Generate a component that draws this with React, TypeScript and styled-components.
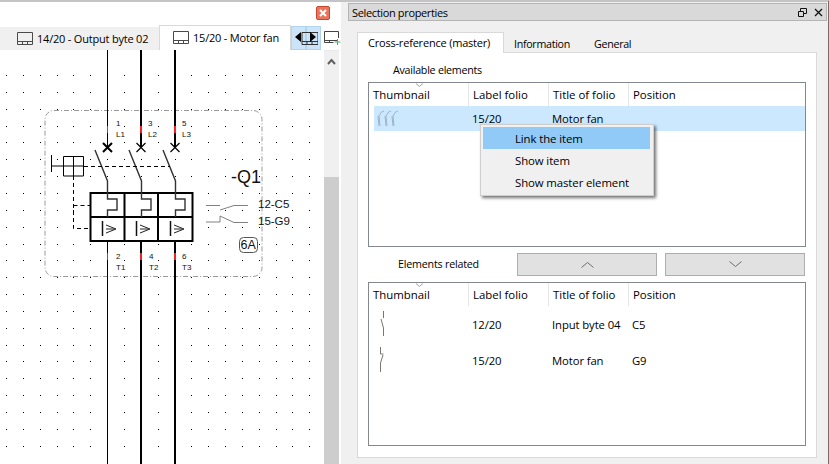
import React from "react";
import styled, { createGlobalStyle } from "styled-components";

const Global = createGlobalStyle`
  html, body { margin: 0; padding: 0; background: #f0f0f0; }
  * { box-sizing: border-box; }
`;

const Window = styled.div`
  width: 829px; height: 464px; display: flex; overflow: hidden; background: #f0f0f0;
  border-top: 2px solid #c4c4c4; border-right: 1px solid #6e6e6e;
  font-family: "Open Sans", "Noto Sans", sans-serif; font-size: 11px; letter-spacing: -0.2px; color: #000;
`;
const LeftPane = styled.div`width: 341px; flex: none; display: flex; flex-direction: column; background: #fff;`;
const CloseBar = styled.div`height: 23px; flex: none; display: flex; justify-content: flex-end; align-items: flex-start; padding: 4px 11px 0 0;`;
const CloseButton = styled.div`
  width: 14px; height: 14px; background: #e9765c; border: 1px solid #c9452e; border-radius: 2px;
  display: flex; align-items: center; justify-content: center;
`;
const TabBar = styled.div`height: 25px; flex: none; display: flex; align-items: flex-end; background: #fff;`;
const FolioTab = styled.div<{ $active?: boolean }>`
  display: flex; align-items: center; gap: 4px; flex: none;
  height: ${p => (p.$active ? 25 : 23)}px;
  width: ${p => (p.$active ? 132 : 159)}px;
  padding-left: ${p => (p.$active ? 13 : 17)}px;
  padding-bottom: ${p => (p.$active ? 2 : 0)}px;
  background: ${p => (p.$active ? "#fff" : "#f0f0f0")};
  border: ${p => (p.$active ? "1px solid #d9d9d9" : "none")};
  border-bottom: none;
  white-space: nowrap;
`;
const ScrollArrow = styled.div`width: 15px; height: 24px; flex: none; background: #cce4f7; border: 1px solid #b3d4ee;`;
const NavGroup = styled.div`position: relative; display: flex; flex: none;`;
const NavIcon = styled.svg`position: absolute; left: 3px; top: 5px;`;
const AddIcon = styled.svg`margin: 0 0 5px 3px; flex: none;`;
const Work = styled.div`flex: 1; display: flex; min-height: 0;`;
const Canvas = styled.svg`width: 324px; height: 414px; flex: none; display: block; background: #fff;`;
const VScroll = styled.div`width: 15px; flex: none; display: flex; flex-direction: column; background: #f0f0f0; border-top: 1px solid #e8e8e8;`;
const VArrow = styled.svg`display: block; margin: 7px 0 0 3px; flex: none;`;
const VThumb = styled.div`margin-top: auto; height: 287px; background: #cdcdcd;`;
const RightPane = styled.div`flex: 1; min-width: 0; display: flex; flex-direction: column; padding: 1px 1px 0 7px;`;
const TitleBar = styled.div`
  height: 18px; flex: none; display: flex; align-items: center; justify-content: space-between;
  background: #d9d9d9; border: 1px solid #b4b4b4; padding: 0 3px 0 3px; letter-spacing: -0.35px;
`;
const TitleIcons = styled.div`display: flex; align-items: center; gap: 7px;`;
const PropTabs = styled.div`height: 20px; margin: 11px 0 0 9px; flex: none; display: flex; align-items: flex-end;`;
const PropTab = styled.div<{ $active?: boolean; $w: number }>`
  width: ${p => p.$w}px; height: ${p => (p.$active ? 21 : 18)}px; flex: none; padding-left: 10px;
  background: ${p => (p.$active ? "#fff" : "transparent")};
  border: ${p => (p.$active ? "1px solid #d9d9d9" : "none")};
  border-bottom: none; margin-bottom: ${p => (p.$active ? -1 : 0)}px;
  font-size: ${p => (p.$active ? 11 : 10.7)}px; letter-spacing: ${p => (p.$active ? -0.2 : -0.3)}px;
  position: relative; z-index: 1; white-space: nowrap; line-height: ${p => (p.$active ? 19 : 20)}px;
`;
const Page = styled.div`
  position: relative; width: 460px; height: 406px; margin-left: 9px; flex: none;
  background: #fff; border: 1px solid #d9d9d9; display: flex; flex-direction: column; padding: 0 9px 0 10px;
`;
const GroupLabel = styled.div`height: 29px; padding: 9px 0 0 25px; flex: none; line-height: 17px; font-size: 10.7px; letter-spacing: -0.25px;`;
const List = styled.div<{ $h: number }>`
  height: ${p => p.$h}px; width: 438px; flex: none; border: 1px solid #828790; background: #fff; position: relative;
`;
const HeaderRow = styled.div`display: grid; grid-template-columns: 100px 80px 80px 1fr; height: 23px; font-size: 11.4px; letter-spacing: 0;`;
const HeaderCell = styled.div<{ $last?: boolean }>`
  padding-left: 4px; border-right: ${p => (p.$last ? "none" : "1px solid #e5e5e5")};
  line-height: 23px; position: relative; white-space: nowrap;
`;
const SortMark = styled.svg`position: absolute; left: 46px; top: 0; display: block;`;
const Row = styled.div<{ $selected?: boolean; $h: number }>`
  display: grid; grid-template-columns: 94px 80px 80px 1fr; margin-left: 5px; align-items: center;
  height: ${p => p.$h}px; background: ${p => (p.$selected ? "#cce8ff" : "transparent")};
  font-size: 11.3px; letter-spacing: -0.1px;
`;
const Cell = styled.div`padding-left: 4px; white-space: nowrap;`;
const ThumbCell = styled.div`padding-left: 0;`;
const Thumb = styled.svg`display: block;`;
const RelatedBar = styled.div`height: 35px; flex: none; display: flex; align-items: flex-start; padding-top: 6px;`;
const RelatedLabel = styled.div`width: 149px; padding: 3px 0 0 30px; font-size: 10.7px; white-space: nowrap; line-height: 17px; flex: none;`;
const MoveButton = styled.div`
  width: 140px; height: 23px; flex: none; margin-right: 8px; background: #e1e1e1; border: 1px solid #adadad;
  display: flex; align-items: center; justify-content: center;
`;
const Menu = styled.div`
  position: absolute; left: 122px; top: 71px; width: 174px; height: 72px; background: #f0f0f0;
  border: 1px solid #cfcfcf; box-shadow: 2px 2px 3px rgba(0,0,0,.55); padding: 2px; display: flex; flex-direction: column;
`;
const MenuItem = styled.div<{ $hot?: boolean }>`
  height: 22px; width: 167px; padding-left: 32px; line-height: 24px; white-space: nowrap; font-size: 11.4px; letter-spacing: -0.1px;
  background: ${p => (p.$hot ? "#91c9f7" : "transparent")};
`;
const FolioGlyph = styled.svg`flex: none;`;

const FolioIcon = () => (
  <FolioGlyph width="16" height="13" viewBox="0 0 16 13">
    <path d="M.5.5h15v12H.5zM.5 9.5h15M5.5 9.5v3M10.5 9.5v3" fill="none" stroke="#4a4a4a" strokeWidth="1" />
  </FolioGlyph>
);

const Chevron = ({ up }: { up?: boolean }) => (
  <svg width="13" height="7" viewBox="0 0 13 7">
    <path d={up ? "M.5 6.5l6-5 6 5" : "M.5.5l6 5 6-5"} fill="none" stroke="#6d6d6d" strokeWidth="1" />
  </svg>
);

const Sort = () => (
  <SortMark width="9" height="5" viewBox="0 0 9 5"><path d="M1 .5l3.5 3 3.5-3" fill="none" stroke="#a0a0a0" /></SortMark>
);

const Header = () => (
  <HeaderRow>
    <HeaderCell>Thumbnail<Sort /></HeaderCell>
    <HeaderCell>Label folio</HeaderCell>
    <HeaderCell>Title of folio</HeaderCell>
    <HeaderCell $last>Position</HeaderCell>
  </HeaderRow>
);

const xs = Array.from({ length: 19 }, (_, i) => Math.round(6 + i * 16.85));
const ys = Array.from({ length: 23 }, (_, i) => Math.round(75 + i * 16.85));
const phases = [
  { x: 107.5, w: 1, top: 147, bottom: 241, xw: 2 },
  { x: 141, w: 2, top: 147, bottom: 241, xw: 1.2 },
  { x: 175, w: 2, top: 147, bottom: 241, xw: 1.2 },
];
const blocks = [0, 34, 68];

const Diagram = () => (
  <Canvas viewBox="0 50 324 414">
    <g fill="#000">
      {xs.flatMap(x => ys.map(y => <rect key={x + "-" + y} x={x} y={y} width="1" height="1" />))}
    </g>
    <rect x="45" y="110.5" width="217" height="166" rx="9" fill="none" stroke="#9a9a9a" strokeDasharray="5 2 1 2" />
    {phases.map(p => (
      <g key={p.x}>
        <path d={`M${p.x} 50V147`} stroke="#000" strokeWidth={p.w} />
        <path d={`M${p.x} 241V464`} stroke="#000" strokeWidth={p.w} />
        <path d={`M${p.x} 126V133M${p.x} 253V260`} stroke="#f02020" strokeWidth={p.w} />
        <path d={`M${p.x - 4.5} 143l9 9M${p.x + 4.5} 143l-9 9`} stroke="#000" strokeWidth={p.xw} />
      </g>
    ))}
    <rect x="90.5" y="193" width="102" height="48" fill="#fff" stroke="#000" strokeWidth="2" />
    <path d="M90 217H192M124.5 193V241M158 193V241" stroke="#000" strokeWidth="2" />
    {blocks.map(d => (
      <g key={d} transform={`translate(${d} 0)`} fill="none">
        <path d="M95 150L107.5 181V199H117V210H107.5V217" stroke="#333" strokeWidth="1.4" />
        <path d="M102.5 221V236" stroke="#111" strokeWidth="1.5" />
        <path d="M106 225L116 229L106 233M106 229H114" stroke="#222" strokeWidth="1" />
      </g>
    ))}
    <path d="M51.5 155V172M51.5 166H63.5M63.5 156.5H83.5V176H63.5ZM73.5 156.5V176" fill="none" stroke="#000" />
    <path d="M63.5 166H83.5" stroke="#000" />
    <path d="M84 166.5H170M73.5 176V228.5H90M73.5 205.5H90" fill="none" stroke="#000" strokeDasharray="4 3" />
    <path d="M206 205.5H220M220 210L234 205.5H248M206 222H220V216L234 222.5H248" fill="none" stroke="#808080" strokeWidth="1" />
    <g fontFamily="'Liberation Sans', sans-serif" fill="#111" letterSpacing="0">
      <text x="231" y="183" fontSize="18">-Q1</text>
      <text x="258" y="208" fontSize="11.5">12-C5</text>
      <text x="258" y="225" fontSize="11.5">15-G9</text>
      <text x="240.5" y="249" fontSize="12.5">6A</text>
      {[
        ["1", "L1", 116, 126], ["3", "L2", 148, 126], ["5", "L3", 182, 126],
        ["2", "T1", 116, 259], ["4", "T2", 149, 259], ["6", "T3", 182, 259],
      ].map(([n, l, x, y]) => (
        <g key={n as string} fontSize="8">
          <text x={(x as number)} y={y as number}>{n}</text>
          <text x={x as number} y={(y as number) + 10.5}>{l}</text>
        </g>
      ))}
    </g>
    <rect x="239.5" y="237.5" width="18" height="15" rx="4" fill="none" stroke="#555" />
  </Canvas>
);

export default function App() {
  return (
    <Window>
      <Global />
      <LeftPane>
        <CloseBar>
          <CloseButton>
            <svg width="8" height="8" viewBox="0 0 8 8"><path d="M1 1l6 6M7 1L1 7" stroke="#fff" strokeWidth="2" /></svg>
          </CloseButton>
        </CloseBar>
        <TabBar>
          <FolioTab><FolioIcon />14/20 - Output byte 02</FolioTab>
          <FolioTab $active><FolioIcon />15/20 - Motor fan</FolioTab>
          <NavGroup>
            <ScrollArrow />
            <ScrollArrow />
            <NavIcon width="24" height="15" viewBox="0 0 24 15">
              <path d="M8.5 2.5h16v12h-16zM8.5 11.5h16M13.5 11.5v3M18.5 11.5v3" transform="translate(-.5 -1)" fill="none" stroke="#333" />
              <path d="M7 1v10L1 6zM16 1v10l6-5z" fill="#000" />
            </NavIcon>
          </NavGroup>
          <AddIcon width="17" height="14" viewBox="0 0 17 14">
            <path d="M14.5 7V.5H.5v11h9M.5 9.5h13M5.5 9.5v2" fill="none" stroke="#444" />
            <path d="M13.5 8v6M10.5 11h6" stroke="#3fb56c" />
          </AddIcon>
        </TabBar>
        <Work>
          <Diagram />
          <VScroll>
            <VArrow width="9" height="7" viewBox="0 0 9 7"><path d="M1 6l3.5-4L8 6" fill="none" stroke="#606060" strokeWidth="2" /></VArrow>
            <VThumb />
          </VScroll>
        </Work>
      </LeftPane>
      <RightPane>
        <TitleBar>
          <span>Selection properties</span>
          <TitleIcons>
            <svg width="9" height="9" viewBox="0 0 9 9"><path d="M.5 3.5h5v5h-5zM2.5 3V.5h6v5H6" fill="none" stroke="#111" /></svg>
            <svg width="9" height="9" viewBox="0 0 9 9"><path d="M1 1l7 7M8 1L1 8" stroke="#111" strokeWidth="1.3" /></svg>
          </TitleIcons>
        </TitleBar>
        <PropTabs>
          <PropTab $active $w={147}>Cross-reference (master)</PropTab>
          <PropTab $w={80}>Information</PropTab>
          <PropTab $w={70}>General</PropTab>
        </PropTabs>
        <Page>
          <GroupLabel>Available elements</GroupLabel>
          <List $h={165}>
            <Header />
            <Row $selected $h={25}>
              <ThumbCell>
                <Thumb width="26" height="19" viewBox="0 0 26 19">
                  <path d="M10 2Q7 2 5 7l1 10M4 7l1 10M17 2Q14 2 12 7l1 10M11 7l1 10M24 2Q21 2 19 7l1 10M18 7l1 10" fill="none" stroke="#9db4c6" strokeWidth="1" />
                </Thumb>
              </ThumbCell>
              <Cell>15/20</Cell>
              <Cell>Motor fan</Cell>
              <Cell />
            </Row>
          </List>
          <RelatedBar>
            <RelatedLabel>Elements related</RelatedLabel>
            <MoveButton><Chevron up /></MoveButton>
            <MoveButton><Chevron /></MoveButton>
          </RelatedBar>
          <List $h={164}>
            <Header />
            <Row $h={36}>
              <ThumbCell>
                <Thumb width="12" height="28" viewBox="0 0 12 28">
                  <path d="M9.5 1v7M7 9l2.5 9v8" fill="none" stroke="#777" />
                </Thumb>
              </ThumbCell>
              <Cell>12/20</Cell>
              <Cell>Input byte 04</Cell>
              <Cell>C5</Cell>
            </Row>
            <Row $h={36}>
              <ThumbCell>
                <Thumb width="12" height="28" viewBox="0 0 12 28">
                  <path d="M6.5 1v7h3M9 9l-2.5 8v9" fill="none" stroke="#777" />
                </Thumb>
              </ThumbCell>
              <Cell>15/20</Cell>
              <Cell>Motor fan</Cell>
              <Cell>G9</Cell>
            </Row>
          </List>
          <Menu>
            <MenuItem $hot>Link the item</MenuItem>
            <MenuItem>Show item</MenuItem>
            <MenuItem>Show master element</MenuItem>
          </Menu>
        </Page>
      </RightPane>
    </Window>
  );
}
